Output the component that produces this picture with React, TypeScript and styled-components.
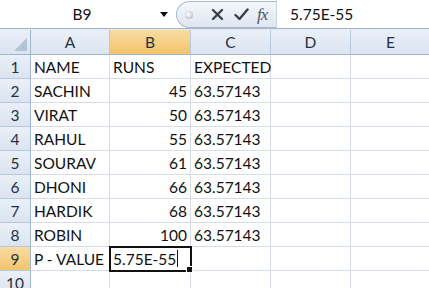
import * as React from 'react';
import styled, {createGlobalStyle, css} from 'styled-components';

const GlobalStyle = createGlobalStyle`
    html, body {
        margin: 0;
        padding: 0;
        background: #ffffff;
        overflow: hidden;
    }
    body {
        font-family: Lato, "Open Sans", "Liberation Sans", sans-serif;
    }
`;

const Window = styled.div`
    width: 429px;
    height: 288px;
    overflow: hidden;
    background: #ffffff;
`;

const FormulaBar = styled.div`
    display: flex;
    align-items: stretch;
    height: 28px;
    border-bottom: 1px solid #a7b8cd;
    background: #ffffff;
`;

const NameBox = styled.div`
    width: 176px;
    display: flex;
    align-items: center;
    font-size: 15.5px;
    color: #111;
`;

const NameText = styled.div`
    flex: 1;
    text-align: center;
    padding-left: 4px;
`;

const DropArrow = styled.div`
    width: 0;
    height: 0;
    border-left: 4px solid transparent;
    border-right: 4px solid transparent;
    border-top: 5px solid #111;
    margin-right: 8px;
`;

const ButtonPill = styled.div`
    width: 100px;
    display: flex;
    align-items: center;
    padding-left: 8px;
    box-sizing: border-box;
    margin: 1px 0 0;
    border: 1px solid #a9b9ce;
    border-right: none;
    border-radius: 14px 0 0 14px;
    background: linear-gradient(#f4f7fb, #dfe6f0);
`;

const Dot = styled.div`
    width: 8px;
    height: 8px;
    border-radius: 50%;
    background: radial-gradient(circle at 40% 40%, #ffffff, #a9b3bf);
    margin-right: 18px;
`;

const IconSlot = styled.div<{ $gap: number }>`
    display: flex;
    align-items: center;
    margin-right: ${(p) => p.$gap}px;
`;

const Fx = styled.span`
    font-family: "Liberation Serif", serif;
    font-style: italic;
    font-size: 17px;
    color: #4a5566;
    letter-spacing: -1px;
`;

const FormulaInput = styled.div`
    flex: 1;
    display: flex;
    align-items: center;
    padding-left: 13px;
    font-size: 15.5px;
    color: #111;
    border-left: 1px solid #c8d3e0;
`;

const Spacer = styled.div`
    height: 1px;
    background: #e4e9f1;
`;

const Sheet = styled.div`
    display: grid;
    grid-template-columns: 31px 79px 81px 80px 80px 80px;
    grid-auto-rows: 24px;
    grid-template-rows: 25px;
    font-size: 15.5px;
    color: #111;
`;

const headerBg = css<{ $active?: boolean }>`
    background: ${(p) => (p.$active
        ? 'linear-gradient(#f9dca3, #f2c46c)'
        : 'linear-gradient(#eaf0f8, #dbe4f1)')};
`;

const Corner = styled.div`
    position: relative;
    border-right: 1px solid #9eb6ce;
    border-bottom: 1px solid #9eb6ce;
    background: linear-gradient(#eaf0f8, #dbe4f1);
    &::after {
        content: '';
        position: absolute;
        right: 3px;
        bottom: 3px;
        width: 0;
        height: 0;
        border-left: 13px solid transparent;
        border-bottom: 13px solid #b3c3d6;
    }
`;

const ColHead = styled.div<{ $active?: boolean }>`
    ${headerBg};
    display: flex;
    align-items: center;
    justify-content: center;
    border-right: 1px solid #b9c9dc;
    border-bottom: 1px solid #9eb6ce;
    color: #27313d;
`;

const RowHead = styled.div<{ $active?: boolean }>`
    ${headerBg};
    display: flex;
    align-items: center;
    justify-content: center;
    border-right: 1px solid #9eb6ce;
    border-bottom: 1px solid #b9c9dc;
    color: #27313d;
`;

const Cell = styled.div<{ $num?: boolean; $selected?: boolean }>`
    position: relative;
    display: flex;
    align-items: center;
    justify-content: ${(p) => (p.$num ? 'flex-end' : 'flex-start')};
    padding: 0 3px;
    border-right: 1px solid #d6dde8;
    border-bottom: 1px solid #d6dde8;
    white-space: nowrap;
    ${(p) => p.$selected && css`
        outline: 2px solid #111;
        outline-offset: -1px;
        z-index: 1;
        &::before {
            content: '';
            position: absolute;
            right: 12px;
            top: 3px;
            bottom: 3px;
            width: 1px;
            background: #111;
        }
        &::after {
            content: '';
            position: absolute;
            right: -3px;
            bottom: -3px;
            width: 5px;
            height: 5px;
            background: #111;
            border: 1px solid #fff;
        }
    `}
`;

const cols = ['A', 'B', 'C', 'D', 'E'];

const rows: string[][] = [
    ['NAME', 'RUNS', 'EXPECTED'],
    ['SACHIN', '45', '63.57143'],
    ['VIRAT', '50', '63.57143'],
    ['RAHUL', '55', '63.57143'],
    ['SOURAV', '61', '63.57143'],
    ['DHONI', '66', '63.57143'],
    ['HARDIK', '68', '63.57143'],
    ['ROBIN', '100', '63.57143'],
    ['P - VALUE', '5.75E-55', ''],
    ['', '', ''],
];

const CrossIcon = () => (
    <svg width="13" height="13" viewBox="0 0 13 13">
        <path d="M2 2 L11 11 M11 2 L2 11" stroke="#364150" strokeWidth="2.4" strokeLinecap="round"/>
    </svg>
);

const CheckIcon = () => (
    <svg width="15" height="13" viewBox="0 0 15 13">
        <path d="M1.5 7 L5.5 11 L13.5 1.5" stroke="#364150" strokeWidth="2.4" fill="none" strokeLinecap="round" strokeLinejoin="round"/>
    </svg>
);

const App: React.FC = () => {
    return (
        <Window>
            <GlobalStyle/>
            <FormulaBar>
                <NameBox>
                    <NameText>B9</NameText>
                    <DropArrow/>
                </NameBox>
                <ButtonPill>
                    <Dot/>
                    <IconSlot $gap={10}><CrossIcon/></IconSlot>
                    <IconSlot $gap={8}><CheckIcon/></IconSlot>
                    <Fx>fx</Fx>
                </ButtonPill>
                <FormulaInput>5.75E-55</FormulaInput>
            </FormulaBar>
            <Spacer/>
            <Sheet>
                <Corner/>
                {cols.map((c) => (
                    <ColHead key={c} $active={c === 'B'}>{c}</ColHead>
                ))}
                {rows.map((r, i) => (
                    <React.Fragment key={i}>
                        <RowHead $active={i === 8}>{i + 1}</RowHead>
                        <Cell>{r[0]}</Cell>
                        <Cell $num={i > 0 && i < 8} $selected={i === 8}>{r[1]}</Cell>
                        <Cell>{r[2]}</Cell>
                        <Cell/>
                        <Cell/>
                    </React.Fragment>
                ))}
            </Sheet>
        </Window>
    );
};

export default App;
